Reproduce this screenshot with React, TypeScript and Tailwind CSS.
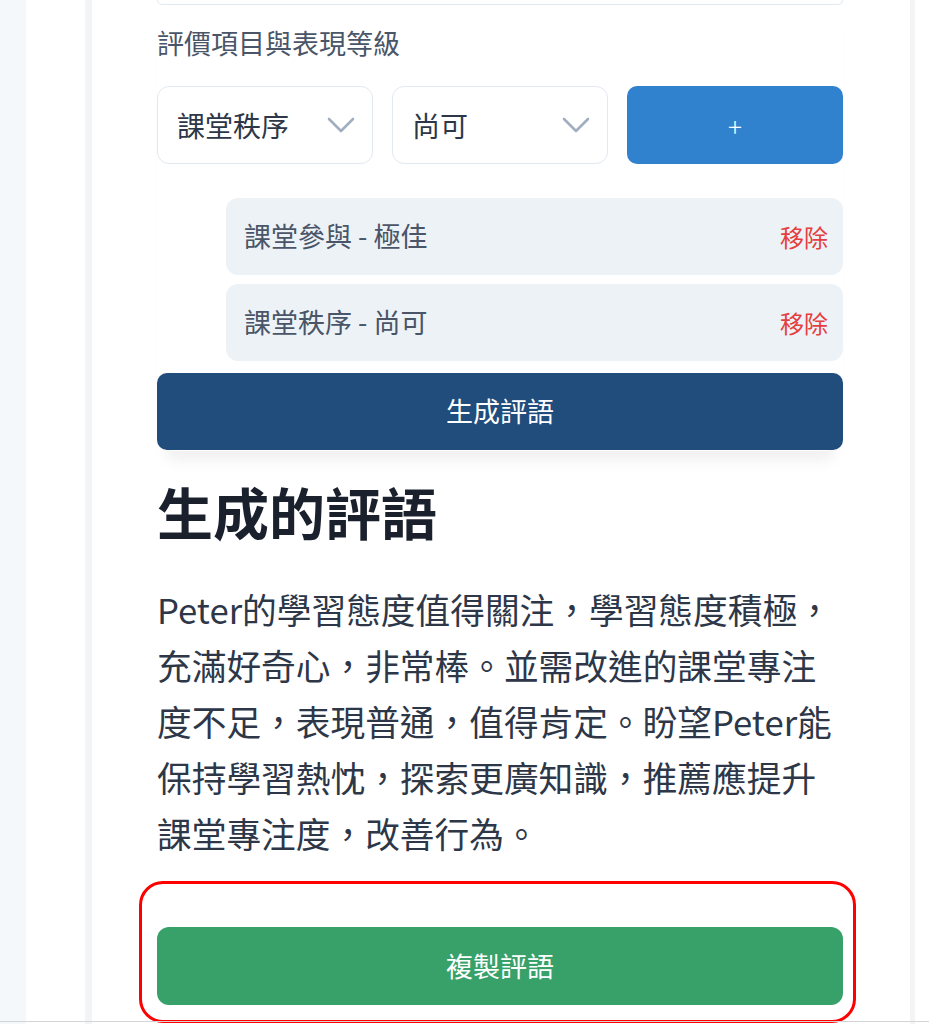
import React from "react";

const font = { fontFamily: '"Noto Sans CJK TC", "Noto Sans", sans-serif' };

function Chevron() {
  return (
    <svg width="28" height="18" viewBox="0 0 28 18" fill="none">
      <path d="M2 3 L14 15 L26 3" stroke="#a0aec0" strokeWidth="2.6" strokeLinecap="round" strokeLinejoin="round" />
    </svg>
  );
}

function Select({ label }: { label: string }) {
  return (
    <div className="h-[78px] rounded-[12px] border-[1.5px] border-[#e2e8f0] bg-white flex items-center justify-between pl-[19px] pr-[17px]">
      <span className="text-[28px] text-[#2d3748]">{label}</span>
      <Chevron />
    </div>
  );
}

function Item({ text }: { text: string }) {
  return (
    <div className="h-[77px] rounded-[12px] bg-[#edf2f7] flex items-center justify-between pl-[18px] pr-[15px]">
      <span className="text-[27px] text-[#4a5568]">{text}</span>
      <span className="text-[24px] text-[#e53e3e]">移除</span>
    </div>
  );
}

export default function App() {
  return (
    <div className="relative h-[1024px] w-[929px] overflow-hidden bg-white flex" style={font}>
      <div className="w-[26px] bg-[#f4f8fb]" />
      <div className="w-[59px] bg-white" />
      <div className="w-[7px] bg-[#f3f4f6]" />
      <div className="w-[818px] bg-white pl-[65px] pr-[67px]">
        <div className="flex flex-col">
          <div className="pb-[1px] bg-white shadow-[0_18px_14px_-8px_rgba(0,0,0,0.06)] rounded-b-[18px]">
            <div className="h-[5px] border-[1.5px] border-t-0 border-[#e2e8f0] rounded-b-[10px] bg-white" />
            <div className="mt-[18px] h-[40px] leading-[40px] text-[27px] text-[#4a5568]">評價項目與表現等級</div>
            <div className="mt-[23px] grid grid-cols-3 gap-[19px]">
              <Select label="課堂秩序" />
              <Select label="尚可" />
              <div className="h-[78px] rounded-[10px] bg-[#3182ce] flex items-center justify-center text-white text-[26px] font-light">
                +
              </div>
            </div>
            <div className="mt-[34px] ml-[69px] flex flex-col gap-[9px]">
              <Item text="課堂參與 - 極佳" />
              <Item text="課堂秩序 - 尚可" />
            </div>
            <div className="mt-[12px] h-[77px] rounded-[10px] bg-[#204d7c] flex items-center justify-center text-white text-[27px]">
              生成評語
            </div>
          </div>
          <h2 className="mt-[28px] h-[64px] leading-[64px] text-[56px] font-bold text-[#1a202c]">生成的評語</h2>
          <p className="mt-[38px] text-[34.7px] leading-[56px] text-[#2d3748]">
            Peter的學習態度值得關注，學習態度積極，充滿好奇心，非常棒。並需改進的課堂專注度不足，表現普通，值得肯定。盼望Peter能保持學習熱忱，探索更廣知識，推薦應提升課堂專注度，改善行為。
          </p>
          <div className="mt-[66px] h-[78px] rounded-[12px] bg-[#38a169] flex items-center justify-center text-white text-[27px]">
            複製評語
          </div>
        </div>
      </div>
      <div className="w-[5px] bg-[#f3f4f6]" />
      <div className="flex-1 bg-white" />
      <div className="absolute left-[139px] top-[881px] w-[717px] h-[142px] rounded-[24px] border-[3px] border-[#ff0000]" />
      <div className="absolute left-0 right-0 bottom-[2px] h-[1px] bg-[#d4d4d4]" />
    </div>
  );
}
